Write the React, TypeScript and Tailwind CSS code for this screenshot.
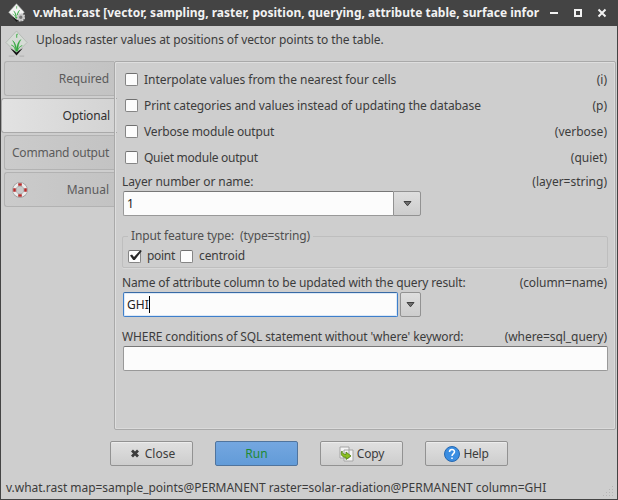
import type { ReactNode } from "react";

function Check({ checked = false }: { checked?: boolean }) {
  return (
    <span className="block h-[13px] w-[13px] shrink-0 rounded-[2px] border border-[#858585] border-t-[#707070] bg-[#fcfcfc]">
      {checked && (
        <svg width="14" height="13" viewBox="0 0 14 13" className="-mt-[2px] block overflow-visible">
          <path d="M1 6.5 L3 5.5 L5 8 L11.5 1 L12.8 2 L5.8 11 L4.2 11 Z" fill="#262626" />
        </svg>
      )}
    </span>
  );
}

function Flag({ label, name }: { label: ReactNode; name: string }) {
  return (
    <div className="flex h-[26px] items-center pr-[8px] pl-[10px]">
      <span className="-mt-px">
        <Check />
      </span>
      <span className="ml-[6px]">{label}</span>
      <span className="ml-auto">{name}</span>
    </div>
  );
}

function Label({ left, right }: { left: ReactNode; right: ReactNode }) {
  return (
    <div className="flex h-[18px] items-center justify-between pr-[8px] pl-[7px]">
      <span>{left}</span>
      <span>{right}</span>
    </div>
  );
}

function Arrow() {
  return (
    <svg width="9" height="7" viewBox="0 0 9 7">
      <path d="M1 1.5 H8 L4.5 5.8 Z" fill="#707070" stroke="#404040" strokeWidth="1" />
    </svg>
  );
}

function Tab({ children, icon }: { children: ReactNode; icon?: ReactNode }) {
  return (
    <div className="ml-[3px] flex h-[35px] items-center justify-between rounded-l-[3px] border border-r-0 border-[#b2b2b2] bg-linear-to-r from-[#cbcbcb] to-[#c3c3c3] pr-[5px] pl-[7px] text-[#5b5b5b]">
      <span>{icon}</span>
      <span>{children}</span>
    </div>
  );
}

function Button({ children, primary = false }: { children: ReactNode; primary?: boolean }) {
  return (
    <div
      className={
        primary
          ? "flex h-[25px] w-[83px] items-center justify-center rounded-[2px] border border-[#50749d] bg-linear-to-b from-[#74a7e0] to-[#629bd8] text-[#1f8a33]"
          : "flex h-[25px] w-[83px] items-center justify-center rounded-[2px] border border-[#929292] bg-linear-to-b from-[#e0e0e0] to-[#cdcdcd] shadow-[inset_0_1px_0_#ececec]"
      }
    >
      {children}
    </div>
  );
}

function GrassIcon({ size, gear = false }: { size: number; gear?: boolean }) {
  return (
    <svg width={size} height={size * 1.17} viewBox="0 0 24 28">
      <path d="M12 1 L23 13 L12 24 L1 13 Z" fill={gear ? "#f4f4f4" : "#d6dcd6"} stroke="#aeb3ae" strokeWidth="0.8" />
      <path d="M5.5 19 L12 26.5 L18.5 19 L15 21 L12 23.5 L9 21 Z" fill="#151515" />
      <path d="M11.2 22.5 C11 17 9.5 13 8 11 C10.5 13 12 17 12.4 22 Z M12.3 22 C12 16 14 12 16.5 10 C14.5 13 13.5 17 13.3 22 Z" fill="#2fa63b" stroke="#2fa63b" strokeWidth="0.5" />
      <path d="M10.8 21 C10.5 18.5 8.5 16.5 6.5 15.5 M13.4 20.5 C14 18.5 16 17 18 16 M12.2 8 V5 L13.2 4" fill="none" stroke="#4db254" strokeWidth="1.1" />
      {!gear && <path d="M4 27.2 H10 M15 27.2 H20" stroke="#999" strokeWidth="0.6" />}
      {gear && (
        <>
          <circle cx="18" cy="20" r="4" fill="none" stroke="#d8d8d8" strokeWidth="4.4" strokeDasharray="2.2 0.9" />
          <circle cx="18" cy="20" r="3.6" fill="#777" stroke="#c8c8c8" strokeWidth="2.4" />
        </>
      )}
    </svg>
  );
}

export default function App() {
  return (
    <div className="flex h-[500px] w-[618px] flex-col overflow-hidden border border-t-0 border-[#444444] bg-[#cecece] font-['Noto_Sans',sans-serif] text-[12px] leading-[18px] whitespace-pre text-[#3c3c3c]">
      <header className="flex h-[26px] shrink-0 items-center bg-[#444444] pr-[8px] pl-[7px] text-[#f2f2f2]">
        <GrassIcon size={17} gear />
        <div className="ml-[8px] font-bold">
          v.what.rast [vector, sampling, raster, position, querying, attribute table, surface infor
        </div>
        <svg className="ml-auto" width="60" height="12" viewBox="0 0 60 12">
          <path d="M1 6 H9" stroke="#f2f2f2" strokeWidth="2" />
          <rect x="26" y="3" width="6" height="6" fill="none" stroke="#f2f2f2" strokeWidth="2" />
          <path d="M49.5 2.5 L56.5 9.5 M56.5 2.5 L49.5 9.5" stroke="#f2f2f2" strokeWidth="2" />
        </svg>
      </header>
      <div className="flex h-[35px] shrink-0 items-center pl-[4px]">
        <GrassIcon size={23} />
        <span className="-mt-[7px] ml-[8px] tracking-[-0.075px]">Uploads raster values at positions of vector points to the table.</span>
      </div>
      <div className="flex h-[369px] shrink-0">
        <nav className="flex w-[113px] shrink-0 flex-col">
          <Tab>
            <span className="tracking-[-0.1px]">Required</span>
          </Tab>
          <div className="my-[2px] mr-[-3px] flex h-[35px] items-center justify-end rounded-l-[3px] border border-r-0 border-[#a9a9a9] bg-linear-to-r from-[#e2e2e2] to-[#d3d3d3] pr-[7px] tracking-[-0.15px] text-[#303030]">
            Optional
          </div>
          <Tab>
            <span className="tracking-[-0.22px]">Command output</span>
          </Tab>
          <div className="h-[2px]" />
          <Tab
            icon={
              <svg width="16" height="16" viewBox="0 0 16 16" className="block">
                <circle cx="8" cy="8" r="5.7" fill="none" stroke="#909090" strokeWidth="4" />
                <circle cx="8" cy="8" r="5.7" fill="none" stroke="#ececec" strokeWidth="3" />
                <path d="M6.2 1.2 H9.8 V3.8 H6.2Z M6.2 12.2 H9.8 V14.8 H6.2Z M1.2 6.2 H3.8 V9.8 H1.2Z M12.2 6.2 H14.8 V9.8 H12.2Z" fill="#b22d2d" />
              </svg>
            }
          >
            Manual
          </Tab>
        </nav>
        <main className="flex w-[502px] flex-col rounded-[2px] border border-[#a9a9a9] pt-[5px] shadow-[inset_1px_1px_0_#dedede,inset_-1px_-1px_0_#dadada]">
          <Flag label={<span className="tracking-[-0.045px]">Interpolate values from the nearest four cells</span>} name="(i)" />
          <Flag label={<span className="tracking-[-0.095px]">Print categories and values instead of updating the database</span>} name="(p)" />
          <Flag label={<span className="tracking-[-0.15px]">Verbose module output</span>} name="(verbose)" />
          <Flag label={<span className="tracking-[-0.25px]">Quiet module output</span>} name="(quiet)" />
          <div className="mt-[2px]">
            <Label left={<span className="tracking-[-0.08px]">Layer number or name:</span>} right="(layer=string)" />
          </div>
          <div className="ml-[8px] flex">
            <div className="flex h-[25px] w-[270px] items-center rounded-l-[2px] border border-r-0 border-[#999] border-t-[#777] bg-[#fcfcfc] pl-[3px] text-[#222]">1</div>
            <div className="flex h-[25px] w-[28px] items-center justify-center rounded-r-[2px] border border-[#929292] bg-linear-to-b from-[#dedede] to-[#cdcdcd]"><Arrow /></div>
          </div>
          <fieldset className="mt-[11px] mr-[7px] ml-[7px] flex h-[41px] rounded-[2px] border border-[#bebebe] pl-[5px] text-[#505050] shadow-[0_1px_0_#d8d8d8]">
            <legend className="px-[3px] tracking-[-0.13px]">Input feature type:  (type=string)</legend>
            <div className="flex h-[22px] items-center text-[#3c3c3c]">
              <Check checked />
              <span className="ml-[6px] tracking-[-0.3px]">point</span>
              <span className="ml-[5px]"><Check /></span>
              <span className="ml-[6px] tracking-[-0.1px]">centroid</span>
            </div>
          </fieldset>
          <div className="mt-[6px]">
            <Label
              left={<span className="tracking-[-0.135px]">Name of attribute column to be updated with the query result:</span>}
              right={<span className="tracking-[-0.08px]">(column=name)</span>}
            />
          </div>
          <div className="ml-[8px] flex gap-[2px]">
            <div className="flex h-[25px] w-[275px] items-center rounded-[2px] border border-[#3e7fcb] border-t-[#386aa5] bg-[#fcfcfc] pl-[3px] text-[#222] shadow-[inset_0_0_0_1px_#dce9f7]">
              GHI<span className="h-[17px] w-px bg-black" />
            </div>
            <div className="flex h-[25px] w-[21px] items-center justify-center rounded-[2px] border border-[#929292] bg-linear-to-b from-[#dedede] to-[#cdcdcd]"><Arrow /></div>
          </div>
          <div className="mt-[11px]">
            <Label
              left={<span className="tracking-[-0.105px]">WHERE conditions of SQL statement without 'where' keyword:</span>}
              right={<span className="tracking-[-0.06px]">(where=sql_query)</span>}
            />
          </div>
          <div className="mr-[7px] ml-[8px] h-[25px] rounded-[2px] border border-[#999] border-t-[#777] bg-[#fcfcfc]" />
        </main>
      </div>
      <div className="mt-[11px] ml-[109px] flex shrink-0 gap-[22px]">
        <Button>
          <svg width="10" height="9" viewBox="0 0 10 9" className="mr-[5px] ml-[2px]">
            <path d="M2 1.5 L8 7.5 M8 1.5 L2 7.5" stroke="#3c3c3c" strokeWidth="2.8" />
          </svg>
          Close
        </Button>
        <Button primary>Run</Button>
        <Button>
          <svg width="15" height="16" viewBox="0 0 15 16" className="mr-[3px]">
            <path d="M1 1 H10 V12 H1Z M5 4 H14 V15 H5Z" fill="#f5f5f5" stroke="#a5a5a5" />
            <path d="M3 5 C3 7.5 5 8.5 7 8.5 V6 L12 10 L7 13.5 V11.3 C3 11.5 1 8 3 5Z" fill="#8bc020" stroke="#4d7d12" strokeWidth="0.8" />
          </svg>
          <span className="tracking-[-0.15px]">Copy</span>
        </Button>
        <Button>
          <svg width="16" height="16" viewBox="0 0 16 16" className="mr-[3px]">
            <circle cx="8" cy="8" r="7.5" fill="#3b8ee2" stroke="#2668b0" />
            <path d="M5.5 6 C5.5 2.8 10.5 2.8 10.5 5.8 C10.5 7.6 8 7.6 8 10 M8 11.5 V13" fill="none" stroke="#fff" strokeWidth="1.5" />
          </svg>
          <span className="tracking-[-0.25px]">Help</span>
        </Button>
      </div>
      <footer className="mt-[13px] flex h-[20px] items-start justify-between pr-[2px] pl-[5px]">
        <span className="tracking-[-0.027px]">v.what.rast map=sample_points@PERMANENT raster=solar-radiation@PERMANENT column=GHI</span>
        <svg width="11" height="11" viewBox="0 0 11 11" className="mt-[7px] mr-px" fill="#b5b5b5">
          <path d="M9 0h1v1h-1z M6 3h1v1h-1z M9 3h1v1h-1z M3 6h1v1h-1z M6 6h1v1h-1z M9 6h1v1h-1z M0 9h1v1h-1z M3 9h1v1h-1z M6 9h1v1h-1z M9 9h1v1h-1z" />
        </svg>
      </footer>
    </div>
  );
}
